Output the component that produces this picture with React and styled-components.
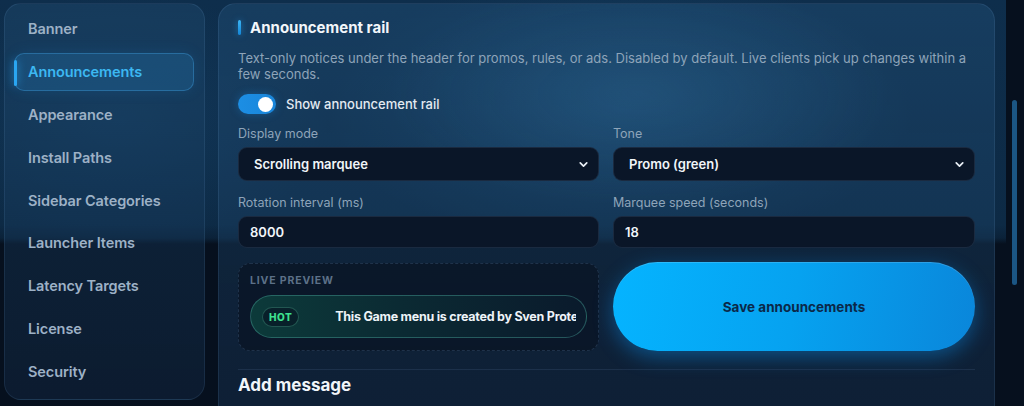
import React from "react";
import styled, { createGlobalStyle } from "styled-components";
import { ChevronDown } from "lucide-react";

const GlobalStyle = createGlobalStyle`
  * { box-sizing: border-box; }
  html, body { margin: 0; padding: 0; height: 406px; overflow: hidden; }
  body {
    font-family: Inter, "Noto Sans", "Liberation Sans", sans-serif;
    color: #e6edf5;
    background:
      radial-gradient(ellipse 420px 200px at 620px 110px, rgba(40, 110, 160, 0.35), transparent 70%),
      radial-gradient(ellipse 300px 180px at 120px 120px, rgba(30, 90, 140, 0.25), transparent 70%),
      linear-gradient(180deg, #0e2e4c 0px, #0d2a45 225px, #0b2239 238px, rgba(8, 24, 42, 0) 244px) 0 0 / 1006px 244px no-repeat,
      #06101e;
  }
`;

const Shell = styled.div`
  display: flex;
  align-items: flex-start;
  gap: 13px;
  padding: 3px 0 0 4px;
  height: 406px;
`;

const Sidebar = styled.nav`
  flex: 0 0 201px;
  height: 397px;
  display: flex;
  flex-direction: column;
  gap: 5px;
  padding: 6px 10px 9px 9px;
  border-radius: 17px;
  border: 1px solid rgba(120, 170, 220, 0.12);
  background: linear-gradient(180deg, rgba(32, 74, 110, 0.45) 0%, rgba(24, 58, 92, 0.4) 60%, rgba(20, 42, 70, 0.45) 100%);
`;

const NavItem = styled.div`
  position: relative;
  height: 38px;
  display: flex;
  align-items: center;
  padding-left: 13px;
  border-radius: 10px;
  font-size: 14.5px;
  font-weight: 600;
  letter-spacing: -0.1px;
  color: ${(p) => (p.$active ? "#3cb8f2" : "#9db1c6")};
  background: ${(p) => (p.$active ? "rgba(40, 140, 210, 0.22)" : "transparent")};
  border: 1px solid ${(p) => (p.$active ? "rgba(70, 170, 235, 0.35)" : "transparent")};
  box-shadow: ${(p) => (p.$active ? "0 0 14px rgba(30, 140, 220, 0.15)" : "none")};
`;

const ActiveMark = styled.span`
  position: absolute;
  left: -1px;
  top: 6px;
  width: 3px;
  height: 26px;
  border-radius: 2px;
  background: #2aa6f2;
  box-shadow: 0 0 8px rgba(42, 166, 242, 0.8);
`;

const Main = styled.main`
  flex: 0 0 777px;
  min-height: 420px;
  padding: 13px 18px 0 19px;
  border-radius: 18px;
  border: 1px solid rgba(120, 170, 220, 0.13);
  background:
    radial-gradient(ellipse 360px 160px at 420px 90px, rgba(60, 130, 180, 0.18), transparent 70%),
    linear-gradient(180deg, rgba(34, 80, 120, 0.45) 0%, rgba(28, 66, 102, 0.42) 55%, rgba(22, 46, 76, 0.5) 100%);
  display: flex;
  flex-direction: column;
`;

const SectionTitle = styled.h2`
  margin: 0;
  height: 20px;
  display: flex;
  align-items: center;
  gap: 9px;
  font-size: 15px;
  font-weight: 700;
  color: #f2f6fa;
  &::before {
    content: "";
    width: 3px;
    height: 15px;
    border-radius: 2px;
    background: linear-gradient(180deg, #3cb6f5, #1485d6);
    box-shadow: 0 0 6px rgba(40, 160, 240, 0.6);
  }
`;

const Description = styled.p`
  margin: 13px 0 0 0;
  max-width: 737px;
  font-size: 13px;
  line-height: 16px;
  color: #8ea4b9;
`;

const ToggleRow = styled.label`
  margin-top: 12px;
  height: 20px;
  display: flex;
  align-items: center;
  gap: 10px;
  font-size: 13px;
  font-weight: 500;
  color: #e3eaf2;
`;

const Switch = styled.span`
  width: 38px;
  height: 20px;
  border-radius: 10px;
  background: ${(p) => (p.$on ? "linear-gradient(90deg, #1c8ee4, #1a86da)" : "#223247")};
  box-shadow: 0 0 8px rgba(30, 140, 225, 0.35);
  display: flex;
  align-items: center;
  justify-content: ${(p) => (p.$on ? "flex-end" : "flex-start")};
  padding: 0 3px;
`;

const Knob = styled.span`
  width: 15px;
  height: 15px;
  border-radius: 50%;
  background: #ffffff;
`;

const FieldGrid = styled.div`
  margin-top: 12px;
  display: grid;
  grid-template-columns: 361px 362px;
  column-gap: 14px;
  row-gap: 14px;
`;

const Field = styled.div`
  display: flex;
  flex-direction: column;
  gap: 5px;
`;

const Label = styled.span`
  font-size: 12.5px;
  line-height: 16px;
  color: #8ea4b9;
`;

const SelectWrap = styled.div`
  position: relative;
  height: 34px;
`;

const Select = styled.select`
  appearance: none;
  width: 100%;
  height: 100%;
  padding: 0 30px 0 15px;
  border-radius: 9px;
  border: 1px solid rgba(110, 150, 195, 0.16);
  background: #0a1628;
  color: #f1f5f9;
  font-family: inherit;
  font-size: 13px;
  font-weight: 600;
  outline: none;
`;

const Chevron = styled(ChevronDown)`
  position: absolute;
  right: 9px;
  top: 11px;
  color: #e8eef5;
  pointer-events: none;
`;

const Input = styled.input`
  height: 32px;
  padding: 0 11px;
  border-radius: 9px;
  border: 1px solid rgba(110, 150, 195, 0.16);
  background: #0a1628;
  color: #f1f5f9;
  font-family: inherit;
  font-size: 13px;
  font-weight: 600;
  outline: none;
`;

const ActionGrid = styled.div`
  margin-top: 15px;
  display: grid;
  grid-template-columns: 361px 362px;
  column-gap: 14px;
  align-items: stretch;
`;

const Preview = styled.div`
  height: 88px;
  padding: 11px 11px 12px 11px;
  border-radius: 12px;
  border: 1px dashed rgba(110, 150, 195, 0.22);
  background: rgba(9, 20, 36, 0.75);
  display: flex;
  flex-direction: column;
  gap: 8px;
`;

const PreviewLabel = styled.span`
  font-size: 10.5px;
  line-height: 12px;
  font-weight: 700;
  letter-spacing: 0.08em;
  color: #5d7188;
`;

const Rail = styled.div`
  height: 45px;
  border-radius: 23px;
  border: 1px solid rgba(70, 160, 150, 0.45);
  background: linear-gradient(90deg, #0c3a3a 0%, #0b2a33 45%, #0a1a2c 100%);
  display: flex;
  align-items: center;
  gap: 36px;
  padding: 0 10px 0 11px;
  overflow: hidden;
  white-space: nowrap;
`;

const Badge = styled.span`
  flex: 0 0 auto;
  height: 20px;
  padding: 0 6px;
  display: flex;
  align-items: center;
  border-radius: 10px;
  border: 1px solid rgba(60, 140, 120, 0.5);
  background: #08202a;
  color: #3ee08f;
  font-size: 10px;
  font-weight: 800;
  letter-spacing: 0.05em;
`;

const RailText = styled.span`
  flex: 1;
  overflow: hidden;
  font-size: 12.5px;
  font-weight: 700;
  letter-spacing: -0.25px;
  color: #eef3f8;
`;

const SaveButton = styled.button`
  height: 89px;
  margin-top: -1px;
  border: none;
  border-radius: 45px;
  background: linear-gradient(100deg, #05b4ff 0%, #06a2f0 50%, #0a86da 100%);
  box-shadow: 0 6px 20px rgba(10, 140, 230, 0.45), inset 0 1px 0 rgba(255, 255, 255, 0.15);
  color: #0b2848;
  font-family: inherit;
  font-size: 13.5px;
  font-weight: 700;
`;

const Divider = styled.hr`
  margin: 18px 0 0 0;
  width: 737px;
  border: none;
  border-top: 1px solid rgba(110, 150, 195, 0.14);
`;

const SubTitle = styled.h3`
  margin: 4px 0 0 0;
  font-size: 17px;
  line-height: 22px;
  font-weight: 700;
  color: #f2f6fa;
`;

const ScrollTrack = styled.div`
  flex: 0 0 6px;
  margin-left: 4px;
  height: 403px;
  padding-top: 97px;
`;

const ScrollThumb = styled.div`
  height: 185px;
  width: 5px;
  border-radius: 3px;
  background: #1b5684;
`;

const navItems = [
  "Banner",
  "Announcements",
  "Appearance",
  "Install Paths",
  "Sidebar Categories",
  "Launcher Items",
  "Latency Targets",
  "License",
  "Security",
];

export default function App() {
  return (
    <>
      <GlobalStyle />
      <Shell>
        <Sidebar>
          {navItems.map((item) => (
            <NavItem key={item} $active={item === "Announcements"}>
              {item === "Announcements" && <ActiveMark />}
              {item}
            </NavItem>
          ))}
        </Sidebar>

        <Main>
          <SectionTitle>Announcement rail</SectionTitle>
          <Description>
            Text-only notices under the header for promos, rules, or ads. Disabled by default. Live clients pick up
            changes within a few seconds.
          </Description>
          <ToggleRow>
            <Switch $on>
              <Knob />
            </Switch>
            Show announcement rail
          </ToggleRow>

          <FieldGrid>
            <Field>
              <Label>Display mode</Label>
              <SelectWrap>
                <Select defaultValue="marquee">
                  <option value="marquee">Scrolling marquee</option>
                  <option value="rotate">Rotating</option>
                </Select>
                <Chevron size={13} strokeWidth={3.2} />
              </SelectWrap>
            </Field>
            <Field>
              <Label>Tone</Label>
              <SelectWrap>
                <Select defaultValue="promo">
                  <option value="promo">Promo (green)</option>
                  <option value="info">Info (blue)</option>
                </Select>
                <Chevron size={13} strokeWidth={3.2} />
              </SelectWrap>
            </Field>
            <Field>
              <Label>Rotation interval (ms)</Label>
              <Input defaultValue="8000" />
            </Field>
            <Field>
              <Label>Marquee speed (seconds)</Label>
              <Input defaultValue="18" />
            </Field>
          </FieldGrid>

          <ActionGrid>
            <Preview>
              <PreviewLabel>LIVE PREVIEW</PreviewLabel>
              <Rail>
                <Badge>HOT</Badge>
                <RailText>This Game menu is created by Sven Protek</RailText>
              </Rail>
            </Preview>
            <SaveButton>Save announcements</SaveButton>
          </ActionGrid>

          <Divider />
          <SubTitle>Add message</SubTitle>
        </Main>

        <ScrollTrack>
          <ScrollThumb />
        </ScrollTrack>
      </Shell>
    </>
  );
}
